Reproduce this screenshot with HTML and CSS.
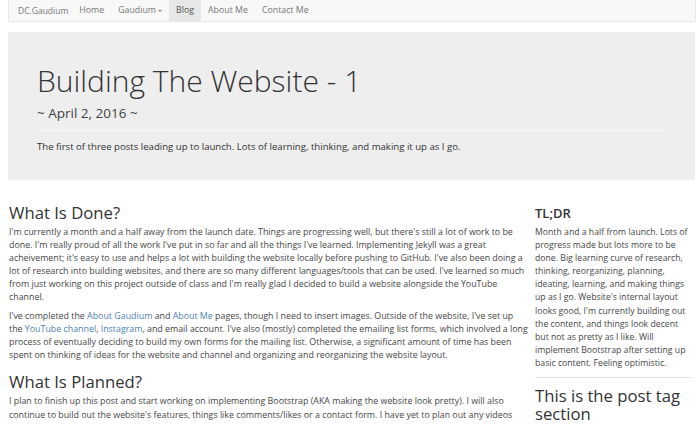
FILE: index.html
```html
<!DOCTYPE html>
<html lang="en">
<head>
<meta charset="utf-8">
<title>Building The Website - 1</title>
<link rel="stylesheet" href="styles.css">
</head>
<body>
<nav class="navbar">
  <a class="brand" href="#">DC.Gaudium</a>
  <a class="nav-link" href="#">Home</a>
  <a class="nav-link" href="#">Gaudium<span class="caret"></span></a>
  <a class="nav-link active" href="#">Blog</a>
  <a class="nav-link" href="#">About Me</a>
  <a class="nav-link" href="#">Contact Me</a>
</nav>
<header class="jumbotron">
  <h1 class="title">Building The Website - 1</h1>
  <p class="date">~ April 2, 2016 ~</p>
  <hr class="jumbo-rule">
  <p class="lead">The first of three posts leading up to launch. Lots of learning, thinking, and making it up as I go.</p>
</header>
<div class="row">
  <main class="main">
    <h2 class="section-title">What Is Done?</h2>
    <p class="text">I'm currently a month and a half away from the launch date. Things are progressing well, but there's still a lot of work to be done. I'm really proud of all the work I've put in so far and all the things I've learned. Implementing Jekyll was a great acheivement; it's easy to use and helps a lot with building the website locally before pushing to GitHub. I've also been doing a lot of research into building websites, and there are so many different languages/tools that can be used. I've learned so much from just working on this project outside of class and I'm really glad I decided to build a website alongside the YouTube channel.</p>
    <p class="text">I've completed the <a href="#">About Gaudium</a> and <a href="#">About Me</a> pages, though I need to insert images. Outside of the website, I've set up the <a href="#">YouTube channel</a>, <a href="#">Instagram</a>, and email account. I've also (mostly) completed the emailing list forms, which involved a long process of eventually deciding to build my own forms for the mailing list. Otherwise, a significant amount of time has been spent on thinking of ideas for the website and channel and organizing and reorganizing the website layout.</p>
    <h2 class="section-title">What Is Planned?</h2>
    <p class="text">I plan to finish up this post and start working on implementing Bootstrap (AKA making the website look pretty). I will also continue to build out the website's features, things like comments/likes or a contact form. I have yet to plan out any videos yet, though.</p>
  </main>
  <aside class="sidebar">
    <h3 class="side-title">TL;DR</h3>
    <p class="side-text">Month and a half from launch. Lots of progress made but lots more to be done. Big learning curve of research, thinking, reorganizing, planning, ideating, learning, and making things up as I go. Website's internal layout looks good, I'm currently building out the content, and things look decent but not as pretty as I like. Will implement Bootstrap after setting up basic content. Feeling optimistic.</p>
    <hr class="side-rule">
    <h2 class="tag-title">This is the post tag section</h2>
  </aside>
</div>
</body>
</html>
```
FILE: styles.css
```css
html, body {
  margin: 0;
  padding: 0;
  background: #fff;
}
body {
  font-family: "Open Sans", "Liberation Sans", sans-serif;
  color: #464646;
  font-size: 8.7px;
  line-height: 13.1px;
  overflow: hidden;
}
a {
  color: #4f7fb3;
  text-decoration: none;
}
.navbar {
  display: flex;
  align-items: stretch;
  height: 21px;
  margin: 0 4px 0 8px;
  padding-left: 2px;
  background: #f8f8f8;
  border: 1px solid #e7e7e7;
  border-top: none;
  border-radius: 0 0 2px 2px;
}
.brand, .nav-link {
  display: flex;
  align-items: center;
  padding: 0 7px;
  color: #777;
  font-size: 8.8px;
}
.brand {
  padding-right: 4px;
  font-size: 8.5px;
}
.nav-link.active {
  background: #e7e7e7;
  color: #555;
}
.caret {
  display: inline-block;
  width: 0;
  height: 0;
  margin-left: 2px;
  border-top: 2px solid #888;
  border-left: 2px solid transparent;
  border-right: 2px solid transparent;
}
.jumbotron {
  margin: 10px 5px 0 8px;
  height: 148px;
  box-sizing: border-box;
  padding: 29px 29px 0 29px;
  background: #eee;
}
.title {
  margin: 0;
  font-size: 30px;
  line-height: 40px;
  font-weight: 300;
  color: #333;
}
.date {
  margin: 3px 0 0;
  font-size: 13.5px;
  line-height: 18px;
  color: #444;
}
.jumbo-rule {
  margin: 8px 0 0;
  border: 0;
  border-top: 1px solid #f6f6f6;
  width: 628px;
}
.lead {
  margin: 9px 0 0;
  font-size: 9.6px;
  line-height: 14px;
  color: #333;
}
.row {
  display: flex;
  gap: 6px;
  margin: 22px 8px 0 9px;
}
.main {
  width: 520px;
  flex: none;
}
.main .text {
  font-size: 8.85px;
}
.sidebar {
  flex: 1;
}
.section-title {
  margin: 0 0 2px;
  font-size: 16.7px;
  line-height: 22px;
  font-weight: 400;
  color: #333;
}
.text {
  margin: 0 0 5.5px;
}
.main .text + .section-title {
  margin-top: 9px;
}
.side-title {
  margin: 0 0 2px;
  font-size: 13px;
  line-height: 22px;
  font-weight: 600;
  color: #333;
}
.side-text {
  margin: 0;
}
.side-rule {
  margin: 7px 0 9px;
  border: 0;
  border-top: 1px solid #e5e5e5;
}
.tag-title {
  margin: 0;
  font-size: 16.7px;
  line-height: 18px;
  font-weight: 400;
  color: #333;
}
```
